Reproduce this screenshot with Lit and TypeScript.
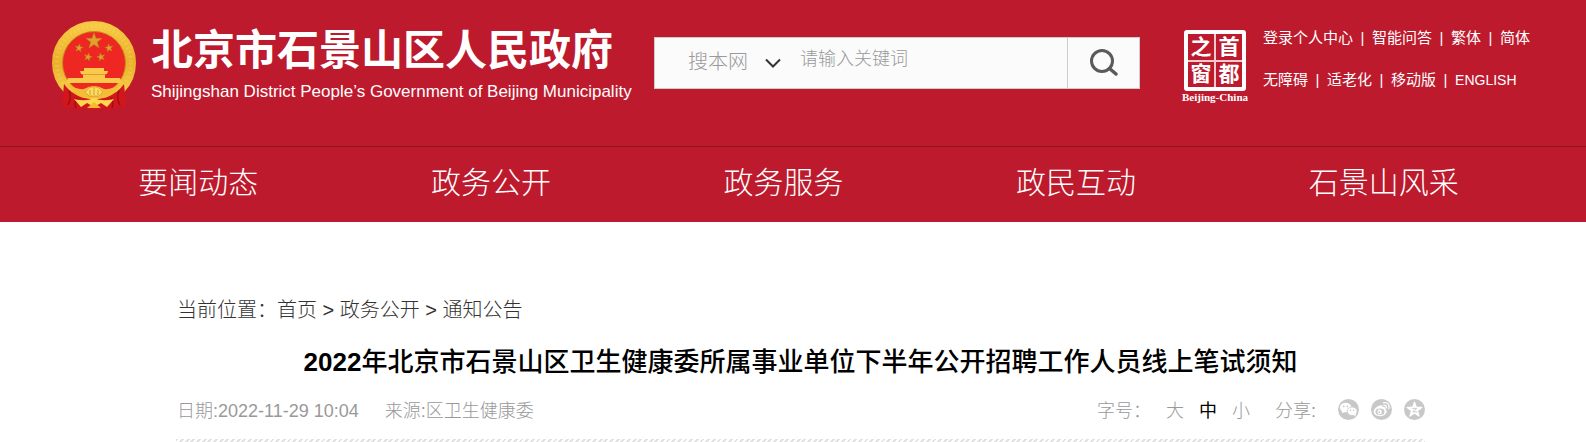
import { LitElement, html, css, svg } from "lit";
import { customElement, state } from "lit/decorators.js";

const star = (cx: number, cy: number, r: number, turn = 0) => {
  const pts: string[] = [];
  for (let i = 0; i < 10; i++) {
    const a = ((i * 36 - 90 + turn) * Math.PI) / 180;
    const d = i % 2 ? r * 0.4 : r;
    pts.push(`${(cx + d * Math.cos(a)).toFixed(2)},${(cy + d * Math.sin(a)).toFixed(2)}`);
  }
  return pts.join(" ");
};

@customElement("national-emblem")
class NationalEmblem extends LitElement {
  static styles = css`
    :host { display: block; }
    svg { display: block; }
  `;
  render() {
    return html`<svg width="84" height="90" viewBox="0 0 84 90" role="img" aria-label="国徽">
      <defs>
        <linearGradient id="gold" x1="0" y1="0" x2="0" y2="1">
          <stop offset="0" stop-color="#f6c843" />
          <stop offset="0.5" stop-color="#eab02c" />
          <stop offset="1" stop-color="#f9d34c" />
        </linearGradient>
      </defs>
      <circle cx="42" cy="42" r="36.5" fill="none" stroke="url(#gold)" stroke-width="11" />
      <circle cx="42" cy="42" r="37" fill="none" stroke="#fbe06a" stroke-width="4" stroke-dasharray="1.5 3" opacity="0.3" />
      <circle cx="42" cy="42" r="31.5" fill="#ee2722" stroke="#c98a1d" stroke-width="1" />
      <g fill="#dda32c" stroke="#b9821f" stroke-width="0.5">
        <polygon points=${star(42, 20, 8.5)} />
        <polygon points=${star(27, 27, 4.2, 10)} />
        <polygon points=${star(57, 27, 4.2, -10)} />
        <polygon points=${star(36, 36, 4.2, 15)} />
        <polygon points=${star(49, 36, 4.2, -15)} />
      </g>
      <path d="M32 47H52V50H56L55 53H29L28 50H32ZM31 53H53V57H68L70 62H14L16 57H31Z" fill="#fac84a" />
      <path d="M30 53.5H54" stroke="#d38c1d" stroke-width="0.7" />
      <path d="M12 63 Q18 72 30 76 L42 79 L54 76 Q66 72 72 63 L74 84 Q70 88 64 86 Q60 90 53 87 L42 89 L31 87 Q24 90 20 86 Q14 88 10 84Z" fill="#d3151c" />
      <path d="M17 70 Q20 77 16 84 M25 77 Q22 82 24 87 M67 70 Q64 77 68 84 M59 77 Q62 82 60 87" stroke="#9d1018" stroke-width="1.6" fill="none" />
      <path d="M15 63 Q25 69 32 68 Q42 62 52 68 Q59 69 69 63 L61 73 Q52 79 42 77 Q32 79 23 73Z" fill="#f3bd36" />
      <path d="M33 71 Q42 60 51 71 L47 75H37Z" fill="#fbdc62" stroke="#d38c1d" stroke-width="0.6" />
      <path d="M38 74V69M42 74V66M46 74V69" stroke="#d38c1d" stroke-width="0.8" />
      <path d="M22 78 Q34 81 42 77 Q50 81 62 78 L55 86 L49 82 L42 86 L35 82 L29 86Z" fill="#fad84f" />
      <path d="M35 87 L42 81 L49 87Z" fill="#f4b92f" />
    </svg>`;
  }
}

@customElement("capital-window")
class CapitalWindow extends LitElement {
  static styles = css`
    :host { display: block; font-family: "Liberation Serif", "Noto Sans CJK SC", serif; }
    a { display: flex; flex-direction: column; align-items: center; width: 68px; color: #fff; text-decoration: none; }
    .seal {
      display: grid; grid-template-columns: 1fr 1fr; grid-template-rows: 1fr 1fr; gap: 2px;
      box-sizing: border-box; width: 62px; height: 61px; border: 4px solid #fff; border-radius: 3px;
      background:
        linear-gradient(#f3c9ce, #f3c9ce) center / 2px 100% no-repeat,
        linear-gradient(#f3c9ce, #f3c9ce) center / 100% 2px no-repeat;
    }
    .seal span { display: grid; place-items: center; font-size: 21px; line-height: 22px; font-weight: 700; }
    .name { font-size: 11px; line-height: 12px; font-weight: 700; white-space: nowrap; }
  `;
  render() {
    return html`<a href="#">
      <span class="seal"><span>之</span><span>首</span><span>窗</span><span>都</span></span>
      <span class="name">Beijing-China</span>
    </a>`;
  }
}

@customElement("site-header")
class SiteHeader extends LitElement {
  static styles = css`
    :host { display: block; background: #bd1a2d; color: #fff; }
    a { color: inherit; text-decoration: none; white-space: nowrap; }
    .top { display: flex; align-items: flex-start; height: 146px; padding: 0 53px 0 52px; box-sizing: border-box; }
    .brand { display: flex; gap: 15px; padding-top: 21px; flex: none; }
    .names { display: flex; flex-direction: column; gap: 4px; padding-top: 5px; }
    .zh { font-size: 42px; line-height: 50px; font-weight: 700; }
    .en { font-size: 17px; line-height: 24px; }
    .search {
      display: flex; align-items: stretch; flex: 0 1 486px; height: 52px; margin: 37px 41px 0 auto;
      box-sizing: border-box; border: 1px solid #ccc; background: #fbfbfb; min-width: 0;
    }
    .scope { display: grid; flex: none; width: 127px; align-items: center; }
    .scope > * { grid-area: 1 / 1; }
    select {
      appearance: none; width: 100%; height: 100%; padding: 0 0 2px 33px; border: 0; background: none;
      color: #999; font: 20px/24px "Liberation Sans", "Noto Sans CJK SC", sans-serif; font-weight: 300;
    }
    .arrow { justify-self: end; pointer-events: none; }
    .query {
      flex: 1; min-width: 0; padding: 0 0 8px 18px; border: 0; background: none; color: #333; outline: 0;
      font: 18px/24px "Liberation Sans", "Noto Sans CJK SC", sans-serif; font-weight: 300;
    }
    .query::placeholder { color: #999; opacity: 1; }
    .go { display: grid; place-items: center; width: 72px; padding: 0; border: 0; border-left: 1px solid #ccc; background: none; flex: none; }
    .seal { padding-top: 30px; flex: none; }
    .links { display: flex; flex-direction: column; gap: 18px; width: 284px; padding: 26px 0 0 14px; box-sizing: border-box; font-size: 15px; line-height: 24px; flex: none; }
    .row { display: flex; white-space: nowrap; }
    .bar { flex: none; width: 19px; text-align: center; }
    .latin { font-size: 14px; }
    nav { display: flex; justify-content: space-around; height: 76px; box-sizing: border-box; border-top: 1px solid #8c1522; padding: 0 41px 0 52px; }
    nav a { font-size: 30px; line-height: 72px; font-weight: 300; }
  `;
  render() {
    const rows = [["登录个人中心", "智能问答", "繁体", "简体"], ["无障碍", "适老化", "移动版", "ENGLISH"]];
    const menu = ["要闻动态", "政务公开", "政务服务", "政民互动", "石景山风采"];
    return html`
      <header>
        <div class="top">
          <a class="brand" href="#">
            <national-emblem></national-emblem>
            <span class="names">
              <span class="zh">北京市石景山区人民政府</span>
              <span class="en">Shijingshan District People’s Government of Beijing Municipality</span>
            </span>
          </a>
          <form class="search" role="search" @submit=${(e: Event) => e.preventDefault()}>
            <div class="scope">
              <select aria-label="搜索范围"><option>搜本网</option></select>
              <svg class="arrow" width="18" height="12" viewBox="0 0 18 12"><path d="M2 2.5L9 9.5L16 2.5" fill="none" stroke="#333" stroke-width="2" /></svg>
            </div>
            <input class="query" type="text" aria-label="关键词" placeholder="请输入关键词" />
            <button class="go" aria-label="搜索">
              <svg width="30" height="30" viewBox="0 0 30 30" fill="none" stroke="#5a5a5a" stroke-width="3"><circle cx="13" cy="13" r="10.5" /><path d="M20.5 20.5L27 26" stroke-width="3.5" stroke-linecap="round" /></svg>
            </button>
          </form>
          <capital-window class="seal"></capital-window>
          <div class="links">
            ${rows.map((r) => html`<div class="row">${r.map((t, i) => html`${i ? html`<span class="bar">|</span>` : ""}<a class=${/^[A-Z]/.test(t) ? "latin" : ""} href="#">${t}</a>`)}</div>`)}
          </div>
        </div>
        <nav>${menu.map((t) => html`<a href="#">${t}</a>`)}</nav>
      </header>`;
  }
}

const wechat = svg`<ellipse cx="8" cy="9" rx="6" ry="5" fill="#fff"/><path d="M4.5 12L4 15L8 13.4Z" fill="#fff"/><ellipse cx="14.8" cy="12.8" rx="5.2" ry="4.4" fill="#fff" stroke="#c8c8c8" stroke-width="0.8"/><path d="M16 16L18.5 18.4L18.6 14.6Z" fill="#fff"/><g fill="#c8c8c8"><circle cx="6" cy="7.8" r="0.9"/><circle cx="9.8" cy="7.8" r="0.9"/><circle cx="13" cy="11.8" r="0.8"/><circle cx="16.4" cy="11.8" r="0.8"/></g>`;
const weibo = svg`<path d="M9.5 6.8C11.5 6 12.7 7 12.2 8.7C14.4 8 15.7 9 15 10.8C18.4 12.6 15.4 18 9.7 18C5 18 2.4 15.4 2.8 12.8C3.3 9.8 7.1 7.4 9.5 6.8Z" fill="#fff"/><ellipse cx="9.4" cy="13.3" rx="4.7" ry="3.4" fill="#c8c8c8"/><circle cx="9" cy="13.5" r="2.4" fill="#fff"/><circle cx="8.6" cy="13.8" r="0.9" fill="#c8c8c8"/><path d="M13 4C17.4 2.8 20 6.2 18.7 10M13.6 6.8C15.6 6.4 16.7 7.6 16 9.4" fill="none" stroke="#fff" stroke-width="1.4" stroke-linecap="round"/>`;
const qzone = svg`<polygon points=${star(11, 11.4, 8)} fill="#fff" stroke="#fff" stroke-width="1.4" stroke-linejoin="round"/><path d="M8.5 9.8H13.3L9.2 13.4H13.8" fill="none" stroke="#c8c8c8" stroke-width="1"/>`;

@customElement("article-head")
class ArticleHead extends LitElement {
  static styles = css`
    :host { display: block; padding: 72px 161px 0 176px; background: #fff; }
    .crumbs { font-size: 20px; line-height: 32px; color: #333; font-weight: 300; padding-left: 1px; }
    .crumbs a { color: inherit; text-decoration: none; }
    h1 { margin: 14px 0 0; font-size: 26px; line-height: 44px; font-weight: 500; color: #000; text-align: center; }
    h1 b { font-weight: 700; }
    .meta { display: flex; align-items: center; justify-content: space-between; height: 49px; margin-bottom: 6px; padding-left: 1px; font-size: 18px; color: #999; font-weight: 300; white-space: nowrap; }
    .facts { display: flex; gap: 26px; }
    .tools, .sizes, .share { display: flex; align-items: center; }
    .sizes { gap: 15px; margin-right: 25px; }
    button { padding: 0; border: 0; background: none; color: inherit; font: inherit; }
    .size.on { color: #000; font-weight: 400; }
    .share { gap: 12px; }
    .share .label { margin-right: 10px; }
    .share svg { display: block; margin-top: 2px; }
    .rule { height: 3px; background: repeating-linear-gradient(135deg, #e2e2e2 0 2px, #fff 2px 4px); }
  `;
  @state() size = "中";
  render() {
    const icon = (name: string, art: unknown) => html`<button aria-label=${name}>
      <svg width="21" height="21" viewBox="0 0 22 22"><circle cx="11" cy="11" r="11" fill="#c8c8c8" />${art}</svg>
    </button>`;
    return html`
      <div class="crumbs">当前位置：<a href="#">首页</a> &gt; <a href="#">政务公开</a> &gt; <a href="#">通知公告</a></div>
      <h1><b>2022</b>年北京市石景山区卫生健康委所属事业单位下半年公开招聘工作人员线上笔试须知</h1>
      <div class="meta">
        <div class="facts"><span>日期:2022-11-29 10:04</span><span>来源:区卫生健康委</span></div>
        <div class="tools">
          <div class="sizes">
            <span>字号：</span>
            ${["大", "中", "小"].map((s) => html`<button class="size ${s === this.size ? "on" : ""}" @click=${() => (this.size = s)}>${s}</button>`)}
          </div>
          <div class="share"><span class="label">分享:</span>${icon("微信", wechat)}${icon("微博", weibo)}${icon("QQ空间", qzone)}</div>
        </div>
      </div>
      <div class="rule"></div>`;
  }
}

@customElement("app-root")
class AppRoot extends LitElement {
  static styles = css`
    :host { display: block; background: #fff; font-family: "Liberation Sans", "Noto Sans CJK SC", sans-serif; }
  `;
  render() {
    return html`<site-header></site-header><article-head></article-head>`;
  }
}
